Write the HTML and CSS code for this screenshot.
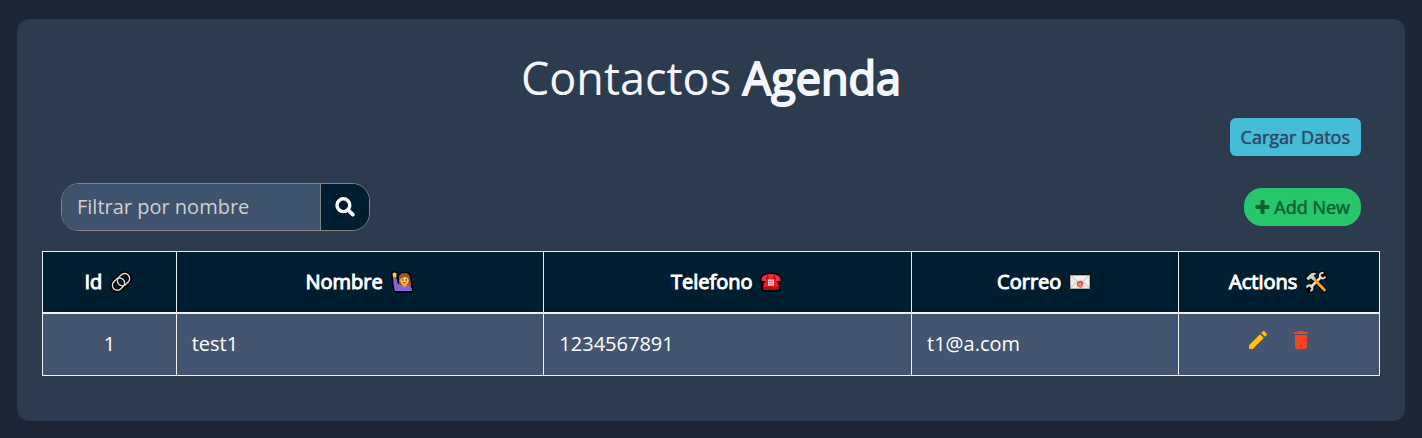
FILE: index.html
```html
<!DOCTYPE html>
<html lang="es">
<head>
<meta charset="utf-8">
<meta name="viewport" content="width=device-width, initial-scale=1">
<title>Contactos Agenda</title>
<link rel="stylesheet" href="styles.css">
</head>
<body>
<main class="card">
  <h1 class="title">Contactos <span class="strong">Agenda</span></h1>
  <div class="load-row"><button type="button" class="btn btn-load">Cargar Datos</button></div>
  <div class="toolbar">
    <form class="search">
      <input class="search-input" type="text" placeholder="Filtrar por nombre" aria-label="Filtrar por nombre">
      <button class="search-btn" type="button" aria-label="Buscar">
        <svg class="search-icon" viewBox="0 0 20 20"><circle cx="8.4" cy="8.2" r="6.4" fill="none" stroke="#fff" stroke-width="3.4"/><path d="M13.2 13 17.8 17.6" stroke="#fff" stroke-width="3.8" stroke-linecap="round"/></svg>
      </button>
    </form>
    <button type="button" class="btn btn-add"><svg class="plus" viewBox="0 0 14 14"><path d="M5 1q0-1 1-1h2q1 0 1 1v4h4q1 0 1 1v2q0 1-1 1H9v4q0 1-1 1H6q-1 0-1-1V9H1Q0 9 0 8V6q0-1 1-1h4z" fill="currentColor"/></svg>Add New</button>
  </div>
  <table class="contacts">
    <colgroup><col class="c-id"><col class="c-name"><col class="c-phone"><col class="c-mail"><col class="c-actions"></colgroup>
    <thead>
      <tr>
        <th scope="col"><span class="head">Id
          <svg class="emoji" viewBox="0 0 22 22" fill="none"><g stroke="#000" stroke-width="4.6"><rect x="1.9" y="8.1" width="13.2" height="10" rx="5" transform="rotate(-45 8.5 13.1)"/><rect x="6.9" y="3.7" width="13.2" height="10" rx="5" transform="rotate(-45 13.5 8.7)"/></g><g stroke="#dedede" stroke-width="1.4"><rect x="1.9" y="8.1" width="13.2" height="10" rx="5" transform="rotate(-45 8.5 13.1)"/><rect x="6.9" y="3.7" width="13.2" height="10" rx="5" transform="rotate(-45 13.5 8.7)"/></g></svg></span></th>
        <th scope="col"><span class="head">Nombre
          <svg class="emoji" viewBox="0 0 22 22"><path d="M1 1h5v7l2 4V5q1-4 6-4 5 0 6 5l1 8 1 7H3L1 10z" fill="#000" stroke="#000" stroke-linejoin="round"/><path d="M8 7q0-5 5.500-5t5.500 5l1 7q-1 3-6 3t-6-3z" fill="#9b582e"/><path d="M2 6h3l2 7 3 1h7q4 1 4 6H4Q2 14 2 6z" fill="#8c62da"/><path d="M1.500 2.500 3 1.500 5.500 2v4H2z" fill="#ffc83d"/><path d="M11.500 12h4v3q-2 2-4 0z" fill="#e99b24"/><ellipse cx="13.5" cy="9.5" rx="4.2" ry="4.6" fill="#ffc83d"/><path d="M9 8q1-5 4.500-5t4.600 5L14.500 5.800z" fill="#9b582e"/><circle cx="11.8" cy="9" r=".8" fill="#402a32"/><circle cx="15.3" cy="9" r=".8" fill="#402a32"/><path d="M11.500 11h4q-2 3-4 0z" fill="#c9393a"/></svg></span></th>
        <th scope="col"><span class="head">Telefono
          <svg class="emoji" viewBox="0 0 22 22"><path d="M1 7q2-5 10-5t10 5v4h-2l1 3v4q0 2-2 2H4q-2 0-2-2v-4l1-3H1z" fill="#000" stroke="#000" stroke-linejoin="round"/><path d="M7 7h8l1 2q3 3 3 7v1H3v-1q0-4 3-7z" fill="#f0152b"/><path d="M1.500 7.500Q3 3 11 3t9.500 4.500V10H16V7H6v3H1.500z" fill="#f22b3b"/><path d="M3 16h16v2l-1 1H4l-1-1z" fill="#a8101b"/><path d="M7.800 4v3M14.200 4v3" stroke="#700915"/><path d="M8 8.500h6v6H8z" fill="#f1e8f1"/><path d="M10 8.500v6M12 8.500v6M8 10.500h6M8 12.500h6" stroke="#ce5269" stroke-width=".6"/></svg></span></th>
        <th scope="col"><span class="head">Correo
          <svg class="emoji" viewBox="0 0 22 22"><path d="M0 3h22v16H0z" fill="#111"/><path d="M1.300 4.300h19.400v13.400H1.300z" fill="#eee"/><path d="m1.300 4.300 9.700 8 9.700-8M1.300 17.700l7-7.500M20.700 17.700l-7-7.500" fill="none" stroke="#c2c2c2"/><path d="M13.700 15.400Q11 17 9 15.200 7.400 12.500 9.300 10.900 12 9.500 13.600 11.600 14.500 14 12.800 14.200L12.600 11.800M12.500 13a1.400 1.400 0 1 1-2.800 0 1.400 1.400 0 1 1 2.800 0" fill="none" stroke="#f04b35" stroke-width="1.100"/></svg></span></th>
        <th scope="col"><span class="head">Actions
          <svg class="emoji" viewBox="0 0 22 22" fill="none"><g stroke="#000" stroke-linecap="round"><path d="M4 18 18 4" stroke-width="5"/><path d="m9 8 10.500 11" stroke-width="5"/><path d="M2.500 7.500 7 3.500l3-1" stroke-width="5"/><circle cx="17.5" cy="4.7" r="2.4" stroke-width="4"/><circle cx="4.5" cy="17.3" r="2.4" stroke-width="4"/></g><path d="M5.500 16.500 16.500 5.500" stroke="#ddd" stroke-width="2.600"/><path d="M18.400 2a2.800 2.800 0 1 0 1.800 3.400M1.900 16.700a2.800 2.800 0 1 1 3.300 3.100" stroke="#ddd" stroke-width="1.900"/><path d="m9.500 8.500 10 10.500" stroke="#f5a70a" stroke-width="3" stroke-linecap="round"/><path d="M1.200 7.200 3.400 9.500 5 8l1-.6L8.200 9.500 10.600 7 8.500 4.800 11.500 2.700Q8.500.9 5.500 2.800z" fill="#d0d0d0"/></svg></span></th>
      </tr>
    </thead>
    <tbody>
      <tr>
        <td class="center">1</td>
        <td>test1</td>
        <td>1234567891</td>
        <td>t1@a.com</td>
        <td class="actions"><div class="action-list">
          <button type="button" class="icon-btn edit" aria-label="Editar"><svg class="icon" viewBox="0 0 24 24"><path fill="currentColor" d="M3 17.25V21h3.750L17.810 9.940l-3.750-3.750L3 17.250zM20.710 7.040a1 1 0 0 0 0-1.410l-2.340-2.340a1 1 0 0 0-1.410 0l-1.830 1.830 3.750 3.750 1.830-1.830z"/></svg></button>
          <button type="button" class="icon-btn delete" aria-label="Eliminar"><svg class="icon" viewBox="0 0 24 24"><path fill="currentColor" d="M6 19c0 1.100.9 2 2 2h8c1.100 0 2-.9 2-2V7H6v12zM19 4h-3.500l-1-1h-5l-1 1H5v2h14V4z"/></svg></button>
        </div></td>
      </tr>
    </tbody>
  </table>
</main>
</body>
</html>
```
FILE: styles.css
```css
* {
  box-sizing: border-box;
}

body {
  margin: 0;
  padding: 19px 17px 17px;
  background: #1d2635;
  color: #fff;
  font: 20px/30px "Open Sans", "Noto Sans", sans-serif;
}

button,
input {
  font-family: inherit;
}

.card {
  padding: 31px 25px 45px;
  border-radius: 12px;
  background: #2d3b4e;
}

.title {
  margin: 0;
  color: #f3f6fd;
  font-size: 45px;
  font-weight: 400;
  line-height: 56px;
  text-align: center;
}

.strong {
  -webkit-text-stroke: 2px currentColor;
}

.load-row {
  display: flex;
  justify-content: flex-end;
  padding: 12px 19px 0;
}

.toolbar {
  display: flex;
  align-items: center;
  justify-content: space-between;
  padding: 27px 19px 20px;
}

.btn {
  display: flex;
  align-items: center;
  height: 38px;
  padding: 0 11px;
  border: 0;
  font-size: 18px;
  line-height: 24px;
  text-shadow: 0 0 1px currentColor;
}

.btn-load {
  border-radius: 6px;
  background: #46bdd8;
  color: #2d4764;
}

.btn-add {
  gap: 4px;
  border-radius: 18px;
  background: #29c76c;
  color: #0d6131;
}

.plus {
  width: 15px;
  height: 14px;
}

.search {
  display: flex;
  width: 309px;
  height: 48px;
  overflow: hidden;
  border: 1px solid #858585;
  border-radius: 18px;
  background: #001e2f;
}

.search-input {
  flex: 1;
  min-width: 0;
  padding: 0 15px 2px;
  border: 0;
  border-right: 1px solid #858585;
  outline: 0;
  background: #40536c;
  color: #fff;
  font-size: 20px;
}

.search-input::placeholder {
  color: #cfcfcf;
}

.search-btn {
  display: grid;
  place-items: center;
  width: 48px;
  padding: 0;
  border: 0;
  background: #001e2f;
}

.search-icon {
  width: 20px;
  height: 20px;
}

.contacts {
  width: 100%;
  border-collapse: collapse;
  table-layout: fixed;
}

.c-id {
  width: 10%;
}

.c-name,
.c-phone {
  width: 27.5%;
}

.c-mail {
  width: 20%;
}

.c-actions {
  width: 15%;
}

th,
td {
  padding: 15px;
  border: 1px solid #f0f0f0;
  text-align: left;
}

th {
  height: 61px;
  padding: 15px 16px 14px 14px;
  border-bottom-width: 2px;
  background: #001e2f;
  font-weight: 400;
  -webkit-text-stroke: 1px currentColor;
}

td {
  height: 63px;
  background: #435571;
}

.head {
  display: flex;
  align-items: center;
  justify-content: center;
  gap: 8px;
}

.emoji {
  width: 22px;
  height: 22px;
  flex: none;
}

.center {
  text-align: center;
}

.actions {
  padding: 14px 15px;
  vertical-align: top;
}

.action-list {
  display: flex;
  justify-content: center;
  gap: 19px;
}

.icon-btn {
  display: flex;
  padding: 0;
  border: 0;
  background: transparent;
}

.edit {
  color: #ffc107;
}

.delete {
  color: #f44322;
}

.icon {
  width: 24px;
  height: 24px;
}
```
